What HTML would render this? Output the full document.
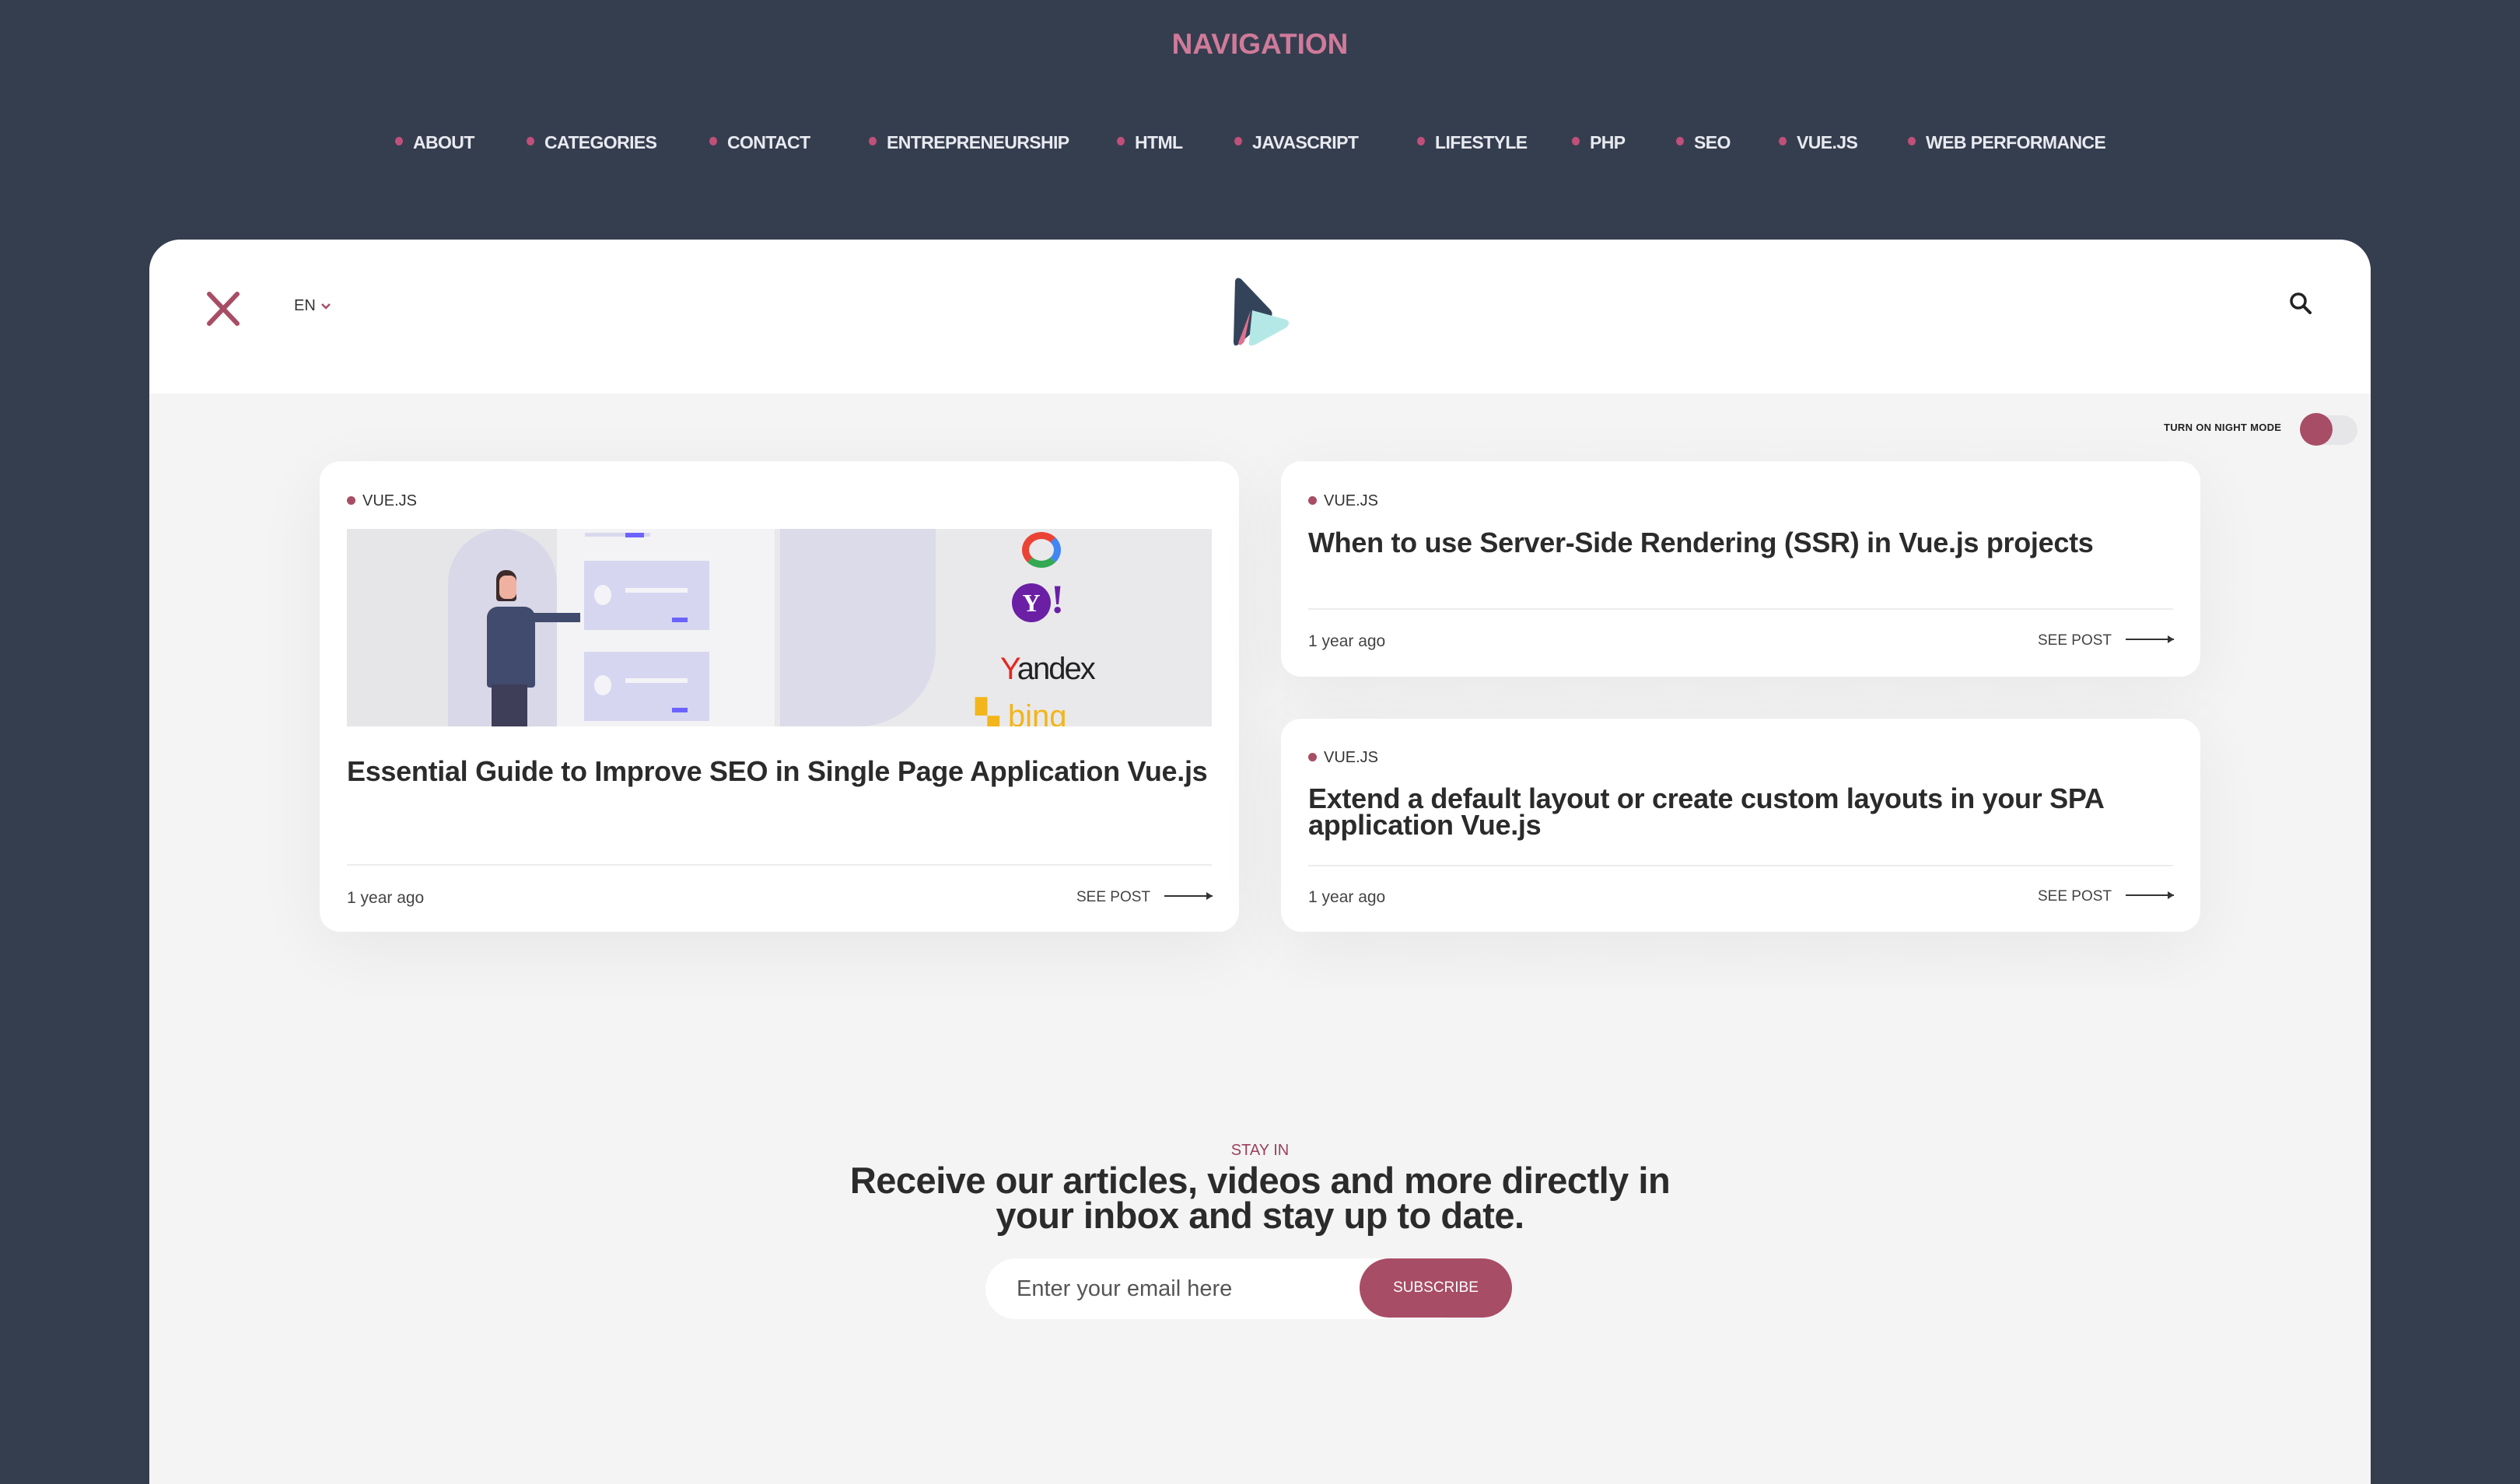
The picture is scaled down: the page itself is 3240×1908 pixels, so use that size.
<!DOCTYPE html>
<html><head><meta charset="utf-8"><style>
*{margin:0;padding:0;box-sizing:border-box}
body{width:3240px;height:1822px;background:#353e4f;font-family:"Liberation Sans",sans-serif;position:relative;overflow:hidden}
.a{position:absolute}
.nav{top:170px;font-size:23px;font-weight:bold;color:#e8eaf0;white-space:nowrap;letter-spacing:-0.6px}
.nav i{position:absolute;left:-23px;top:6px;width:10px;height:11px;border-radius:50%;background:#c0507a}
.wrap{left:192px;top:308px;width:2856px;height:1600px;background:#f4f4f5;border-radius:40px 40px 0 0;overflow:hidden}
.card{background:#fff;border-radius:26px;box-shadow:0 20px 90px rgba(0,0,0,.06)}
.tag{font-size:20px;color:#333;}
.tag b{display:inline-block;width:11px;height:11px;border-radius:50%;background:#a84d66;margin-right:9px;vertical-align:1px}
.title{font-size:36px;font-weight:bold;color:#2b2b2b;line-height:34px;letter-spacing:-0.3px}
.line{height:2px;background:#ececec}
.meta{font-size:21px;color:#444}
.see{font-size:19px;color:#444}
.arr{display:inline-block;width:62px;height:2px;background:#333;vertical-align:6px;margin-left:18px;position:relative}
.arr:after{content:"";position:absolute;right:0;top:-4px;border-left:8px solid #333;border-top:5px solid transparent;border-bottom:5px solid transparent}
</style></head><body>
<div class="a" style="left:0;width:3240px;top:36px;text-align:center;font-size:37px;font-weight:bold;color:#d07a9a">NAVIGATION</div>
<div class="a nav" style="left:531px"><i></i>ABOUT</div>
<div class="a nav" style="left:700px"><i></i>CATEGORIES</div>
<div class="a nav" style="left:935px"><i></i>CONTACT</div>
<div class="a nav" style="left:1140px"><i></i>ENTREPRENEURSHIP</div>
<div class="a nav" style="left:1459px"><i></i>HTML</div>
<div class="a nav" style="left:1610px"><i></i>JAVASCRIPT</div>
<div class="a nav" style="left:1845px"><i></i>LIFESTYLE</div>
<div class="a nav" style="left:2044px"><i></i>PHP</div>
<div class="a nav" style="left:2178px"><i></i>SEO</div>
<div class="a nav" style="left:2310px"><i></i>VUE.JS</div>
<div class="a nav" style="left:2476px"><i></i>WEB PERFORMANCE</div>

<div class="a wrap">
  <div class="a" style="left:0;top:0;width:2856px;height:198px;background:#fff"></div>
  <svg class="a" style="left:72px;top:66px" width="46" height="46" viewBox="0 0 46 46"><path d="M5 4L41 42M41 4L5 42" stroke="#a84d66" stroke-width="6" stroke-linecap="round"/></svg>
  <div class="a" style="left:186px;top:74px;font-size:20px;color:#333">EN</div>
  <svg class="a" style="left:220px;top:81px" width="14" height="10" viewBox="0 0 14 10"><path d="M2 2L7 7L12 2" stroke="#a84d66" stroke-width="2.5" fill="none"/></svg>
  <svg class="a" style="left:1388px;top:47px" width="80" height="92" viewBox="0 0 80 92">
    <path d="M8 6Q10 0 16 4L54 44Q58 50 52 54L12 88Q6 92 6 84Z" fill="#33445a"/>
    <path d="M30 44L74 56Q80 60 74 66L34 88Q24 92 26 84Z" fill="#b4e8e6"/>
    <path d="M22 60L28 44L20 84Q14 92 12 86Z" fill="#e0708e"/>
  </svg>
  <svg class="a" style="left:2750px;top:66px" width="32" height="32" viewBox="0 0 32 32"><circle cx="13" cy="13" r="9" stroke="#222" stroke-width="3.5" fill="none"/><path d="M20 20L28 28" stroke="#222" stroke-width="4" stroke-linecap="round"/></svg>
  <div class="a" style="left:2590px;top:234px;font-size:13px;color:#222;font-weight:bold;letter-spacing:0.3px">TURN ON NIGHT MODE</div>
  <div class="a" style="left:2767px;top:226px;width:72px;height:38px;border-radius:19px;background:#e6e6e8"></div>
  <div class="a" style="left:2765px;top:223px;width:42px;height:42px;border-radius:50%;background:#a84d66"></div>

  <div class="a card" style="left:219px;top:285px;width:1182px;height:605px">
    <div class="a tag" style="left:35px;top:40px"><b></b>VUE.JS</div>
    <div class="a" style="left:35px;top:87px;width:1112px;height:254px;background:#e9e9eb;overflow:hidden">
      <div class="a" style="left:0;top:0;width:551px;height:254px;background:#e6e6e9"></div>
      <div class="a" style="left:130px;top:0;width:140px;height:254px;background:#d9d8e8;border-radius:70px 70px 0 0"></div>
      <div class="a" style="left:270px;top:0;width:280px;height:254px;background:#f3f3f5"></div>
      <div class="a" style="left:557px;top:0;width:200px;height:254px;background:#dcdbe9;border-radius:0 0 100px 0"></div>
      <div class="a" style="left:306px;top:5px;width:84px;height:5px;background:#d8d8ee"></div>
      <div class="a" style="left:358px;top:5px;width:24px;height:6px;background:#6c63ff"></div>
      <div class="a" style="left:305px;top:41px;width:161px;height:89px;background:#d6d6f0"></div>
      <div class="a" style="left:305px;top:158px;width:161px;height:89px;background:#d6d6f0"></div>
      <div class="a" style="left:318px;top:72px;width:22px;height:26px;border-radius:50%;background:#f3f3f8"></div>
      <div class="a" style="left:318px;top:188px;width:22px;height:26px;border-radius:50%;background:#f3f3f8"></div>
      <div class="a" style="left:358px;top:76px;width:80px;height:6px;background:#f3f3f8"></div>
      <div class="a" style="left:358px;top:192px;width:80px;height:6px;background:#f3f3f8"></div>
      <div class="a" style="left:418px;top:114px;width:20px;height:6px;background:#6c63ff"></div>
      <div class="a" style="left:418px;top:230px;width:20px;height:6px;background:#6c63ff"></div>
      <div class="a" style="left:192px;top:53px;width:26px;height:40px;border-radius:12px 12px 4px 4px;background:#3d2b2b"></div>
      <div class="a" style="left:196px;top:60px;width:22px;height:30px;border-radius:8px;background:#f1b1a0"></div>
      <div class="a" style="left:180px;top:100px;width:62px;height:104px;border-radius:14px 14px 4px 4px;background:#414b6e"></div>
      <div class="a" style="left:240px;top:108px;width:60px;height:12px;background:#414b6e"></div>
      <div class="a" style="left:186px;top:200px;width:46px;height:54px;background:#3e3e58"></div>
      <div class="a" style="left:868px;top:4px;width:50px;height:46px;border-radius:50%;border:9px solid #ea4335;border-right-color:#4285f4;border-bottom-color:#34a853"></div>
      <div class="a" style="left:855px;top:70px;width:50px;height:50px;border-radius:50%;background:#6b1fa5;color:#fff;font:bold 32px 'Liberation Serif',serif;text-align:center;line-height:50px">Y</div>
      <div class="a" style="left:905px;top:62px;font:bold 52px 'Liberation Serif',serif;color:#6b1fa5">!</div>
      <div class="a" style="left:840px;top:158px;font-size:40px;color:#222;letter-spacing:-2px"><span style="color:#e52620">Y</span>andex</div>
      <div class="a" style="left:808px;top:218px;font-size:40px;color:#f2b51b">▚ bing</div>
    </div>
    <div class="a title" style="left:35px;top:382px;width:1130px">Essential Guide to Improve SEO in Single Page Application Vue.js</div>
    <div class="a line" style="left:35px;top:518px;width:1112px"></div>
    <div class="a meta" style="left:35px;top:550px">1 year ago</div>
    <div class="a see" style="left:973px;top:550px">SEE POST<span class="arr"></span></div>
  </div>

  <div class="a card" style="left:1455px;top:285px;width:1182px;height:277px">
    <div class="a tag" style="left:35px;top:40px"><b></b>VUE.JS</div>
    <div class="a title" style="left:35px;top:88px;width:1130px">When to use Server-Side Rendering (SSR) in Vue.js projects</div>
    <div class="a line" style="left:35px;top:189px;width:1112px"></div>
    <div class="a meta" style="left:35px;top:220px">1 year ago</div>
    <div class="a see" style="left:973px;top:220px">SEE POST<span class="arr"></span></div>
  </div>

  <div class="a card" style="left:1455px;top:616px;width:1182px;height:274px">
    <div class="a tag" style="left:35px;top:39px"><b></b>VUE.JS</div>
    <div class="a title" style="left:35px;top:86px;width:1130px">Extend a default layout or create custom layouts in your SPA application Vue.js</div>
    <div class="a line" style="left:35px;top:188px;width:1112px"></div>
    <div class="a meta" style="left:35px;top:218px">1 year ago</div>
    <div class="a see" style="left:973px;top:218px">SEE POST<span class="arr"></span></div>
  </div>

  <div class="a" style="left:0;width:2856px;top:1160px;text-align:center;font-size:20px;color:#9b3f5e">STAY IN</div>
  <div class="a" style="left:0;width:2856px;top:1187px;text-align:center;font-size:47px;font-weight:bold;color:#2b2b2b;line-height:45px;letter-spacing:-0.5px">Receive our articles, videos and more directly in<br>your inbox and stay up to date.</div>
  <div class="a" style="left:1075px;top:1310px;width:620px;height:78px;border-radius:39px;background:#fff"></div>
  <div class="a" style="left:1115px;top:1333px;font-size:29px;color:#555">Enter your email here</div>
  <div class="a" style="left:1556px;top:1310px;width:196px;height:76px;border-radius:38px;background:#a84d66;color:#fff;font-size:19px;text-align:center;line-height:76px">SUBSCRIBE</div>
</div>
</body></html>
